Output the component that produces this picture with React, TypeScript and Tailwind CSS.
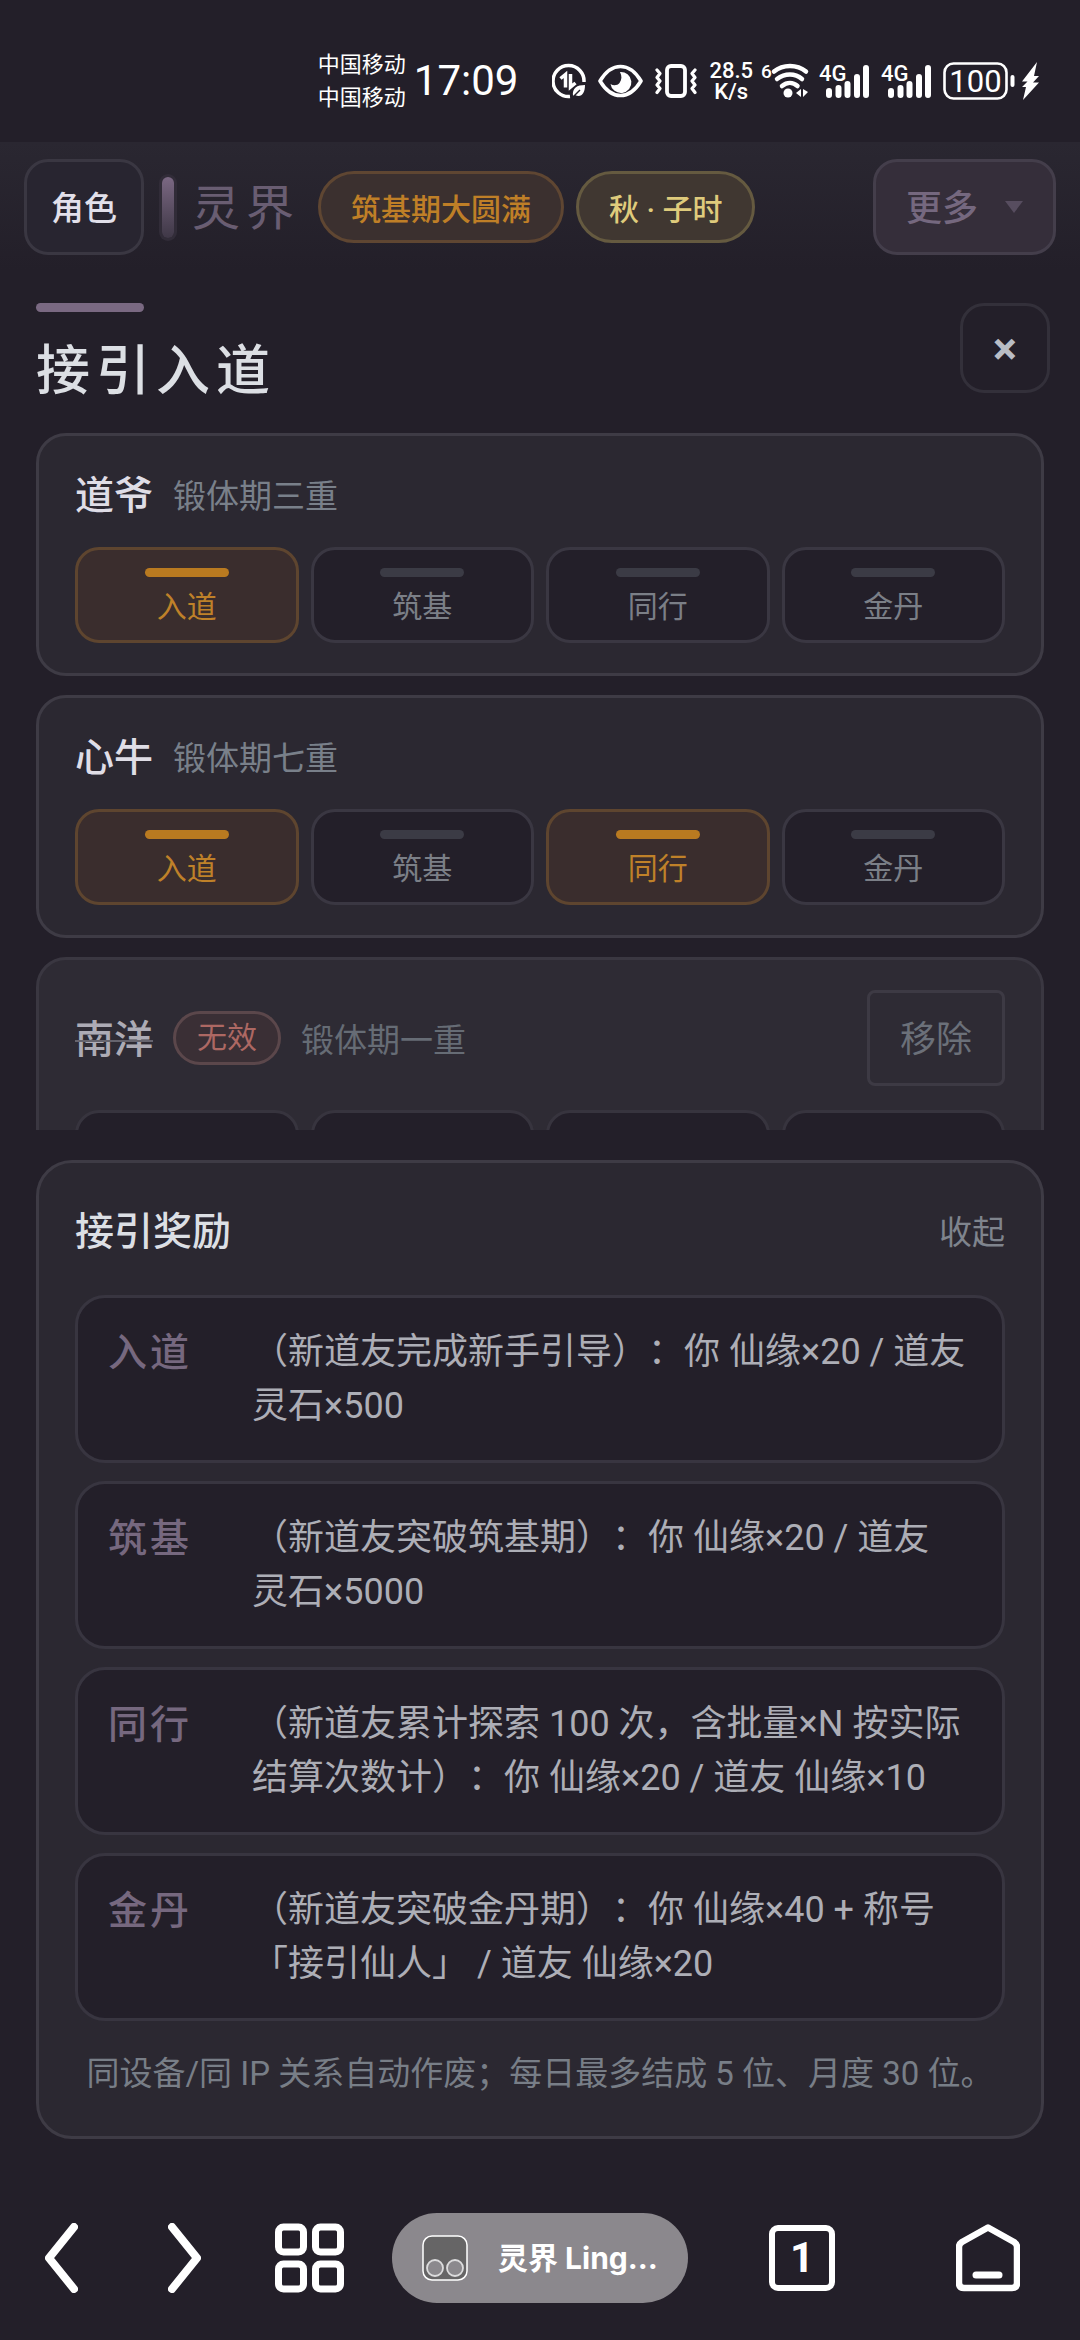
import { useState } from 'react'
import clsx from 'clsx'

const STAGES = ['入道', '筑基', '同行', '金丹']

type Disciple = {
  name: string
  realm: string
  done: string[]
  invalid?: boolean
}

const DISCIPLES: Disciple[] = [
  { name: '道爷', realm: '锻体期三重', done: ['入道'] },
  { name: '心牛', realm: '锻体期七重', done: ['入道', '同行'] },
  { name: '南洋', realm: '锻体期一重', done: [], invalid: true },
]

const REWARDS = [
  { stage: '入道', text: '（新道友完成新手引导）：你 仙缘×20 / 道友 灵石×500' },
  { stage: '筑基', text: '（新道友突破筑基期）：你 仙缘×20 / 道友 灵石×5000' },
  { stage: '同行', text: '（新道友累计探索 100 次，含批量×N 按实际结算次数计）：你 仙缘×20 / 道友 仙缘×10' },
  { stage: '金丹', text: '（新道友突破金丹期）：你 仙缘×40 + 称号「接引仙人」 / 道友 仙缘×20' },
]

function SignalIcon() {
  return (
    <svg width="50" height="38" viewBox="0 0 50 38" className="overflow-visible">
      <text x="0" y="19" fontSize="22" fontWeight="500" fill="#fff">4G</text>
      <g stroke="#fff" strokeWidth="6" strokeLinecap="round">
        <path d="M10 29v4M19.500 26v7M28.500 22v11M38 15v18M47 6v27" />
      </g>
    </svg>
  )
}

function StatusBar() {
  return (
    <div className="flex h-[142px] shrink-0 items-center justify-end gap-3 pr-[42px] pt-5 text-white">
      <div className="-mr-1 text-[22px] leading-[33px]">
        <div>中国移动</div>
        <div>中国移动</div>
      </div>
      <div className="mr-[22px] text-[42px] leading-none">17:09</div>

      {/* data saver */}
      <svg width="34" height="36" viewBox="0 0 34 36" fill="none" stroke="#fff">
        <path d="M18 33.500A15.500 15.500 0 1 1 32 19" strokeWidth="3.500" />
        <path d="M8.500 15.500l5-4v13M18.500 11v13l5-4" strokeWidth="3.500" />
        <path d="M21 33c-1-8 4-11 12-11 0 9-4 13-10 10z" fill="#fff" stroke="none" />
        <path d="M20 35l8-8" stroke="#24212a" strokeWidth="1.500" />
      </svg>
      {/* eye comfort */}
      <svg width="45" height="34" viewBox="0 0 45 34" fill="none">
        <path d="M2 17C8 7 14 2.500 22.500 2.500S37 7 43 17C37 27 31 31.500 22.500 31.500S8 27 2 17z" stroke="#fff" strokeWidth="3.600" strokeLinejoin="round" />
        <path d="M22 8a10.500 10.500 0 1 1-9.500 12c3 2 7 1.500 9-1 2.500-3.500 2.500-7 .5-11z" fill="#fff" />
      </svg>
      {/* vibrate */}
      <svg width="42" height="36" viewBox="0 0 42 36" fill="none" stroke="#fff" strokeLinejoin="round" strokeLinecap="round">
        <rect x="12" y="3" width="18" height="30" rx="4" strokeWidth="3.800" />
        <path d="M2 7l3 3.500-3 4 3 3.500-3 4 3 3.500-3 4M40 7l-3 3.500 3 4-3 3.500 3 4-3 3.500 3 4" strokeWidth="3.200" />
      </svg>
      <div className="text-center text-[22px] font-medium leading-[21px]">
        <div>28.5</div>
        <div>K/s</div>
      </div>
      {/* wifi */}
      <svg width="42" height="38" viewBox="0 0 42 38" fill="none" className="overflow-visible">
        <text x="-4" y="16" fontSize="19" fontWeight="500" fill="#fff">6</text>
        <g stroke="#fff" strokeWidth="4.500" strokeLinecap="round">
          <path d="M9 9.500C18 2 32 2 41 9.500M12 17c8-6 18-6 25 0M17 24c5-4 11-4 15.500 0" />
        </g>
        <circle cx="23" cy="31" r="4.500" fill="#fff" />
        <path d="M36 27v8l-5-4zM38 27v8l5-5z" fill="#fff" />
      </svg>
      <SignalIcon />
      <SignalIcon />
      {/* battery */}
      <svg width="95" height="38" viewBox="0 0 95 38" className="overflow-visible">
        <rect x="1.500" y="1.500" width="62" height="35" rx="9" fill="none" stroke="#fff" strokeWidth="2.600" />
        <text x="32.500" y="30" fontSize="31" textAnchor="middle" fill="#fff">100</text>
        <path d="M69.500 15v8" stroke="#fff" strokeWidth="4" strokeLinecap="round" />
        <path d="M94 0L79 19.500h5.500L79 25h4l-3 13 16-17.500h-6L96 14h-5z" fill="#fff" />
      </svg>
    </div>
  )
}

function TopBar() {
  return (
    <header className="flex shrink-0 items-center bg-linear-to-b from-[#2a2731] to-[#231f29] px-6 pb-[15px] pt-[17px]">
      <button className="h-24 rounded-3xl border-[3px] border-[#3a3742] bg-[#282530] px-6 pt-1 text-[33px] font-medium text-[#e2e0ea]">
        角色
      </button>
      <div className="ml-[18px] h-[61px] w-3 rounded-full bg-linear-to-b from-[#7b6883] to-[#3f3847] ring-3 ring-[#312c38]" />
      <div className="ml-[18px] pt-1 text-[48px] leading-none tracking-[6px] text-[#695d72]">灵界</div>
      <span className="ml-[18px] flex h-[72px] items-center rounded-full border-[3px] border-[#5f4632] bg-[#3b302f] px-[30px] pt-1 text-[30px] font-medium text-[#bf7f27]">
        筑基期大圆满
      </span>
      <span className="ml-3 flex h-[72px] items-center rounded-full border-[3px] border-[#655a40] bg-[#403731] px-[30px] pt-1 text-[30px] font-medium text-[#dfcb7c]">
        秋 · 子时
      </span>
      <button className="ml-auto flex h-24 items-center gap-[27px] rounded-3xl border-[3px] border-[#443e4b] bg-[#352e3a] px-[30px] text-[36px] font-medium text-[#75687f]">
        <span className="pt-1">更多</span>
        <svg width="18" height="12" viewBox="0 0 18 12">
          <path d="M0 0h18L9 12z" fill="#574d5f" />
        </svg>
      </button>
    </header>
  )
}

function Stage({ label, done, invalid }: { label: string; done: boolean; invalid?: boolean }) {
  return (
    <li
      className={clsx(
        'flex h-24 flex-col items-center gap-[9px] rounded-3xl border-[3px] pt-[18px]',
        done ? 'border-[#5e452f] bg-[#3a2d2d] text-[#bf8129]' : 'bg-[#231f29] text-[#7b7f87]',
        !done && (invalid ? 'border-[#37343e]' : 'border-[#3a3742]'),
      )}
    >
      <span className={clsx('h-[9px] w-[84px] rounded-full', done ? 'bg-[#b97a20]' : 'bg-[#3b3b45]')} />
      <span className="text-[30px] leading-[42px]">{label}</span>
    </li>
  )
}

function DiscipleCard({ item, onRemove }: { item: Disciple; onRemove: () => void }) {
  return (
    <li
      className={clsx(
        'shrink-0 rounded-[30px] border-[3px] px-9 py-[30px]',
        item.invalid ? 'border-[#3a3741] bg-[#2e2b34]' : 'border-[#3e3b45] bg-[#2b2831]',
      )}
    >
      <div className="flex items-center gap-5">
        <span
          className={clsx(
            'pt-1 text-[39px] font-medium leading-[53px]',
            item.invalid ? 'text-[#adabb5] line-through decoration-[#66646e] decoration-2' : 'text-[#dfdde6]',
          )}
        >
          {item.name}
        </span>
        {item.invalid && (
          <span className="rounded-full border-[3px] border-[#5b474b] bg-[#3a2f35] px-[21px] text-[30px] leading-[48px] text-[#ad6863]">
            无效
          </span>
        )}
        <span className={clsx('pt-1 text-[33px] leading-[53px]', item.invalid ? 'text-[#666c75]' : 'text-[#79808a]')}>
          {item.realm}
        </span>
        {item.invalid && (
          <button
            className="ml-auto h-24 rounded-lg border-[3px] border-[#3d3a44] px-[30px] pt-1 text-[36px] text-[#6b7079]"
            onClick={onRemove}
          >
            移除
          </button>
        )}
      </div>
      <ul className="mt-6 grid grid-cols-4 gap-3">
        {STAGES.map((stage) => (
          <Stage key={stage} label={stage} done={item.done.includes(stage)} invalid={item.invalid} />
        ))}
      </ul>
    </li>
  )
}

function RewardPanel() {
  const [open, setOpen] = useState(true)

  return (
    <section className="mx-9 mt-[30px] shrink-0 rounded-[36px] border-[3px] border-[#3e3b45] bg-[#2b2831] p-9">
      <div className="flex items-center justify-between pt-1">
        <h2 className="text-[39px] font-medium leading-[59px] text-[#dcdfe4]">接引奖励</h2>
        <button className="text-[33px] leading-[59px] text-[#7f848d]" onClick={() => setOpen(!open)}>
          {open ? '收起' : '展开'}
        </button>
      </div>
      {open && (
        <>
          <ul className="mt-[33px] flex flex-col gap-[18px]">
            {REWARDS.map((reward) => (
              <li
                key={reward.stage}
                className="flex rounded-[30px] border-[3px] border-[#383540] bg-[#231f29] px-[30px] py-[27px] leading-[54px]"
              >
                <span className="w-36 shrink-0 text-[39px] font-medium leading-[57px] tracking-[3px] text-[#76687f]">
                  {reward.stage}
                </span>
                <p className="text-[36px] text-[#adaeb6] [text-spacing-trim:space-all]">{reward.text}</p>
              </li>
            ))}
          </ul>
          <p className="mt-[27px] text-center text-[33px] leading-[52px] text-[#787e87] [text-spacing-trim:space-all]">
            同设备/同 IP 关系自动作废；每日最多结成 5 位、月度 30 位。
          </p>
        </>
      )}
    </section>
  )
}

function BrowserBar() {
  return (
    <nav className="flex shrink-0 items-center px-[45px] pb-[37px] pt-[74px] text-white">
      <button aria-label="后退">
        <svg width="33" height="70" viewBox="0 0 33 70" fill="none" stroke="#fff" strokeWidth="8" strokeLinecap="round" strokeLinejoin="round">
          <path d="M29 4L4 35l25 31" />
        </svg>
      </button>
      <button aria-label="前进" className="ml-[90px]">
        <svg width="33" height="70" viewBox="0 0 33 70" fill="none" stroke="#fff" strokeWidth="8" strokeLinecap="round" strokeLinejoin="round">
          <path d="M4 4l25 31L4 66" />
        </svg>
      </button>
      <button aria-label="菜单" className="ml-[74px]">
        <svg width="69" height="70" viewBox="0 0 69 70" fill="none" stroke="#fff" strokeWidth="7">
          <rect x="3.500" y="4" width="25" height="25" rx="5" />
          <rect x="40.500" y="4" width="25" height="25" rx="5" />
          <rect x="3.500" y="41" width="25" height="25" rx="5" />
          <rect x="40.500" y="41" width="25" height="25" rx="5" />
        </svg>
      </button>
      <button className="ml-12 flex h-[90px] flex-1 items-center gap-[30px] rounded-full bg-[#8b888d] px-[30px] font-['Inter','Noto_Sans_CJK_SC',sans-serif] text-[30px] font-bold">
        <svg width="46" height="46" viewBox="0 0 46 46" stroke="#fff">
          <rect x="1" y="1" width="44" height="44" rx="9" fill="#666566" strokeWidth="1.500" />
          <circle cx="13" cy="33" r="8" fill="#8b898d" stroke="#dcdcdd" strokeWidth="1.800" />
          <circle cx="33" cy="33" r="8" fill="#8b898d" stroke="#dcdcdd" strokeWidth="1.800" />
        </svg>
        <span className="whitespace-nowrap">灵界 Ling…</span>
      </button>
      <button
        aria-label="标签页"
        className="ml-[81px] flex size-[66px] items-center justify-center rounded-[9px] border-[6px] border-white text-[42px] font-bold leading-none"
      >
        1
      </button>
      <button aria-label="主页" className="ml-[121px] mr-[15px]">
        <svg width="64" height="68" viewBox="0 0 64 68" fill="none" stroke="#fff" strokeLinecap="round" strokeLinejoin="round">
          <path d="M32 3.500L6 18q-3 2-3 5v36q0 5 5 5h48q5 0 5-5V23q0-3-3-5z" strokeWidth="6.500" />
          <path d="M20 51h23" strokeWidth="7" />
        </svg>
      </button>
    </nav>
  )
}

export default function App() {
  const [disciples, setDisciples] = useState(DISCIPLES)

  return (
    <div
      lang="zh-CN"
      className="flex h-screen flex-col overflow-hidden bg-[#231f29] font-['Roboto','Noto_Sans_CJK_SC',sans-serif]"
    >
      <StatusBar />
      <TopBar />

      <main className="flex min-h-0 flex-1 flex-col pt-[33px]">
        <div className="flex shrink-0 items-start justify-between pl-9 pr-[30px]">
          <div>
            <div className="h-[9px] w-[108px] rounded-full bg-[#7a6982]" />
            <h1 className="mt-[30px] text-[54px] font-medium leading-[60px] tracking-[6px] text-[#dcdfe4]">接引入道</h1>
          </div>
          <button
            aria-label="关闭"
            className="size-[90px] rounded-3xl border-[3px] border-[#33303a] text-[45px] font-bold leading-none text-[#b9bdc5]"
          >
            ×
          </button>
        </div>

        <ul className="mx-9 mt-[31px] flex min-h-0 flex-1 flex-col gap-[19px] overflow-y-auto [scrollbar-width:none]">
          {disciples.map((item) => (
            <DiscipleCard
              key={item.name}
              item={item}
              onRemove={() => setDisciples(disciples.filter((d) => d !== item))}
            />
          ))}
        </ul>

        <RewardPanel />
      </main>

      <BrowserBar />
    </div>
  )
}
